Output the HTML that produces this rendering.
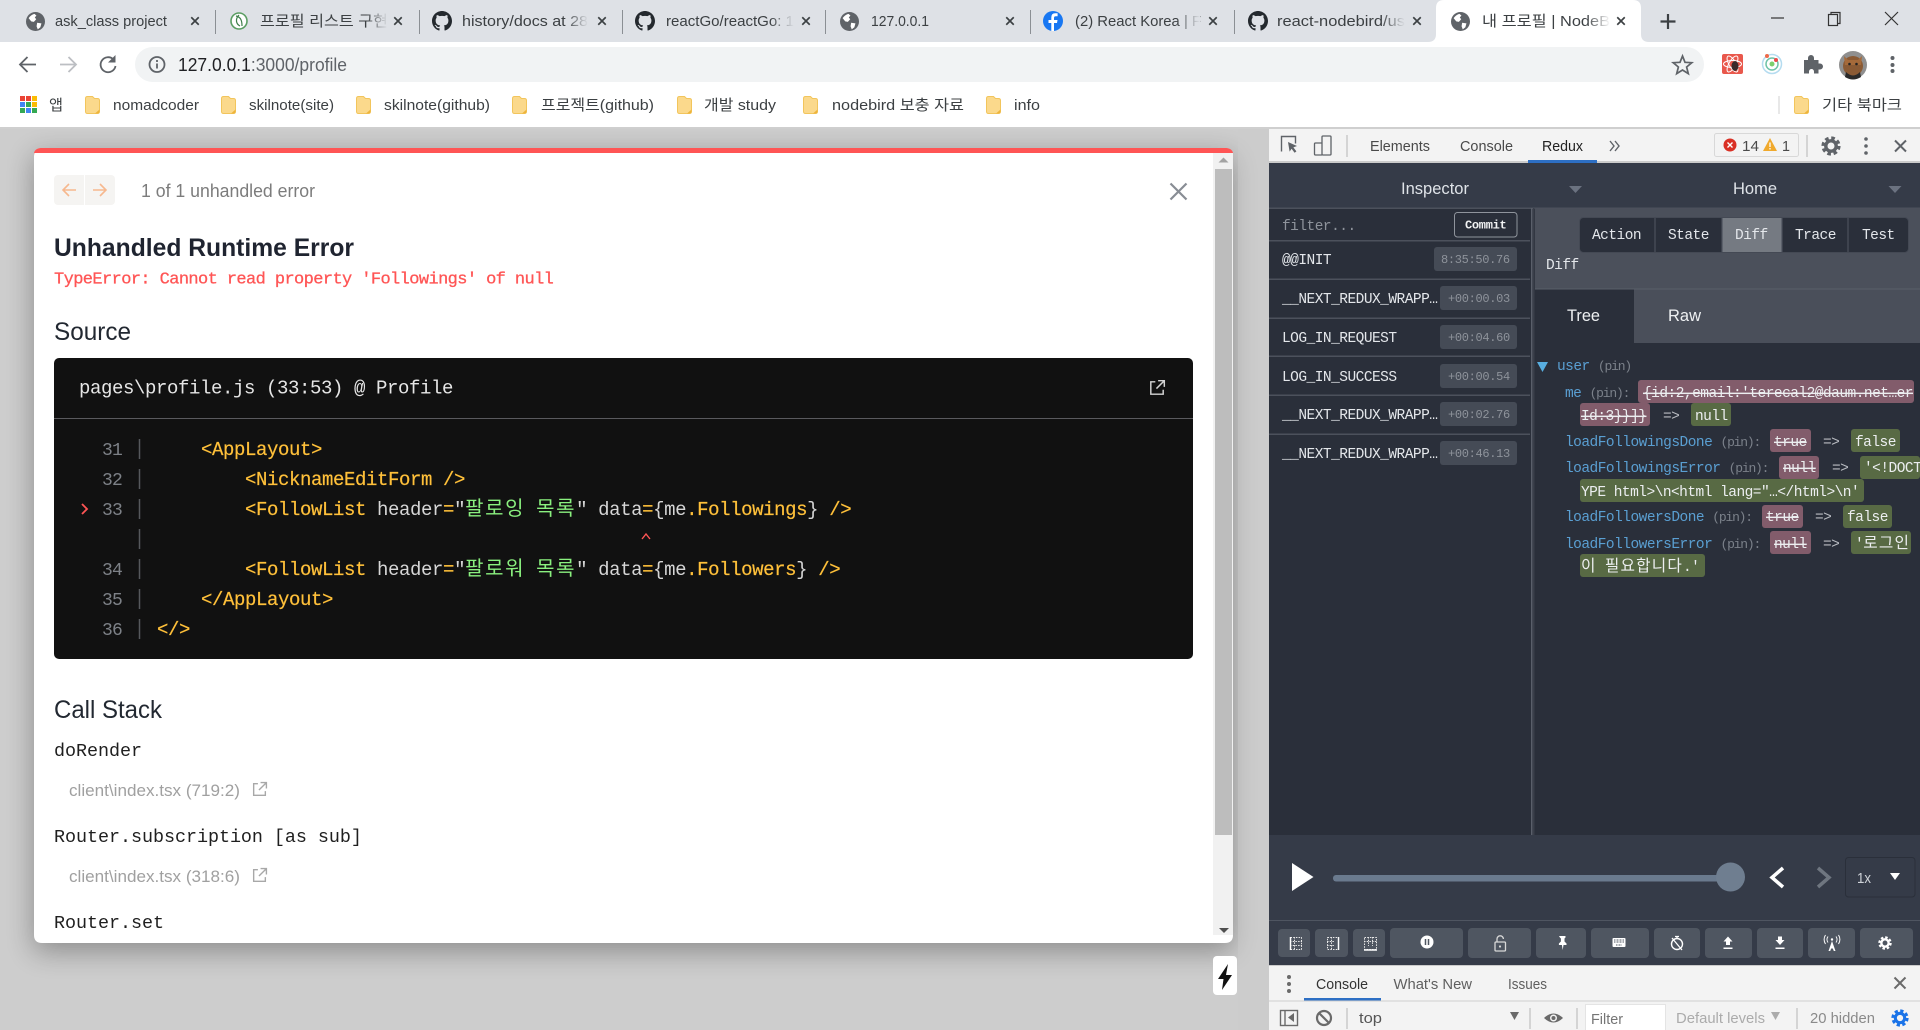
<!DOCTYPE html>
<html lang="ko">
<head>
<meta charset="utf-8">
<title>내 프로필 | NodeBird</title>
<style>
html,body{margin:0;padding:0;width:1920px;height:1030px;overflow:hidden;background:#cdcdcd}
svg{display:block;position:absolute;left:0;top:0}
text{white-space:pre}
.s{font-family:"Liberation Sans","Noto Sans CJK KR",sans-serif}
.m{font-family:"Liberation Mono","Noto Sans CJK KR",monospace}
.tab{font-size:15px;fill:#3c4043}
.bm{font-size:15px;fill:#3c4043}
.dt{font-size:14.5px;fill:#4a4a4a}
.code{font-size:19px;letter-spacing:-.4px;fill:#d6d6d6}
.ln{font-size:18px;letter-spacing:-.8px;fill:#7d8187}
.y{fill:#ffc03a;stroke:#ffc03a;stroke-width:.2px}.g{fill:#8af07f}
.ko{font-size:20px;letter-spacing:1.6px}
.st{font-size:18.4px;letter-spacing:-.04px;fill:#1f1f1f}
.cl{font-size:17px;fill:#a0a0a0}
.d{font-size:14.5px;letter-spacing:-.52px;fill:#e4e7eb}
.tg{font-size:12px;letter-spacing:-.32px;fill:#8e939b}
.k{fill:#5a9fd2}.p{fill:#7b818a;font-size:13px;letter-spacing:-1.2px}.w{fill:#eceef0}.ar{fill:#b9bcc2}
.x{text-decoration:line-through}
.kr{font-size:15.7px;letter-spacing:1.2px}
</style>
</head>
<body>
<svg width="1920" height="1030" viewBox="0 0 1920 1030" xmlns="http://www.w3.org/2000/svg">
<defs>
<symbol id="globe" viewBox="0 0 16 16"><circle cx="8" cy="8" r="8" fill="#5f6368"/><path d="M2.2 5.2C3.4 3.6 5 2.1 7.2 1.6l1.6 1.5-1.4 1.4 1.2 1.6-2 2.2-2.2-.4zM9.4 9l3.6.6-.9 3.2-2.2 1.8-1-2.6z" fill="#fff"/></symbol>
<symbol id="gh" viewBox="0 0 16 16"><path fill="#24292e" d="M8 0C3.58 0 0 3.58 0 8c0 3.54 2.29 6.53 5.47 7.59.4.07.55-.17.55-.38 0-.19-.01-.82-.01-1.49-2.01.37-2.53-.49-2.69-.94-.09-.23-.48-.94-.82-1.13-.28-.15-.68-.52-.01-.53.63-.01 1.08.58 1.23.82.72 1.21 1.87.87 2.33.66.07-.52.28-.87.51-1.07-1.78-.2-3.64-.89-3.64-3.95 0-.87.31-1.59.82-2.15-.08-.2-.36-1.02.08-2.12 0 0 .67-.21 2.2.82.64-.18 1.32-.27 2-.27.68 0 1.36.09 2 .27 1.53-1.04 2.2-.82 2.2-.82.44 1.1.16 1.92.08 2.12.51.56.82 1.27.82 2.15 0 3.07-1.87 3.75-3.65 3.95.29.25.54.73.54 1.48 0 1.07-.01 1.93-.01 2.2 0 .21.15.46.55.38A8.013 8.013 0 0016 8c0-4.42-3.58-8-8-8z"/></symbol>
<symbol id="tx" viewBox="0 0 12 12"><path d="M1.5 1.5l9 9M10.500 1.500l-9 9" stroke="#3c4043" stroke-width="2" fill="none"/></symbol>
<symbol id="fold" viewBox="0 0 15 18"><path d="M.5 2.500q0-2 2-2h5l2 2h3q2 0 2 2v11q0 2-2 2h-10q-2 0-2-2z" fill="#fbd98c" stroke="#f2c55c"/><path d="M10 17.500l4.500-4v2q0 2-2 2z" fill="#eeb43a"/></symbol>
<symbol id="ext" viewBox="0 0 16 16"><path d="M6.500 2.500H2.500v11h11v-4M9 1.500h5.500V7M14.500 1.500L7.500 8.500" fill="none" stroke="currentColor" stroke-width="1.300"/></symbol>
<symbol id="gear" viewBox="0 0 20 20"><circle cx="10" cy="10" r="5.200" fill="none" stroke="currentColor" stroke-width="3.400"/><circle cx="10" cy="10" r="8" fill="none" stroke="currentColor" stroke-width="3.200" stroke-dasharray="3.600 2.683"/></symbol>
<filter id="sh" x="-10%" y="-10%" width="120%" height="125%"><feGaussianBlur stdDeviation="14"/></filter>
<linearGradient id="fd" x1="0" x2="1" y1="0" y2="0"><stop offset="0" stop-color="#dee1e6" stop-opacity="0"/><stop offset="1" stop-color="#dee1e6"/></linearGradient>
<linearGradient id="fw" x1="0" x2="1" y1="0" y2="0"><stop offset="0" stop-color="#fff" stop-opacity="0"/><stop offset="1" stop-color="#fff"/></linearGradient>
</defs>

<!-- Tab strip -->
<rect width="1920" height="42" fill="#dee1e6"/>
<path d="M1428 42q8 0 8-8V8q0-8 8-8H1633q8 0 8 8V34q0 8 8 8z" fill="#fff"/>
<g stroke="#8b8f94" stroke-width="1"><path d="M215.500 10v24M419.500 10v24M622.500 10v24M825.500 10v24M1030.500 10v24M1234.500 10v24"/></g>

<use href="#globe" x="26" y="12" width="19" height="19"/>
<g transform="translate(239 21)"><circle r="8" fill="#fff" stroke="#5b9e63" stroke-width="1.600"/><path d="M-3-5C2-4 3 0 3 5M0-6C-4-2-3 3 1 5" fill="none" stroke="#3e7e4a" stroke-width="1.200"/></g>
<use href="#gh" x="432" y="11" width="20" height="20"/>
<use href="#gh" x="635" y="11" width="20" height="20"/>
<use href="#globe" x="840" y="12" width="19" height="19"/>
<circle cx="1053" cy="21" r="10" fill="#1877f2"/><path d="M1054 31v-8h3l.5-3h-3.500v-2q0-1.700 1.800-1.700h1.800v-3h-2.400q-3.900 0-3.900 4.200v2.500h-2.800v3h2.800v8z" fill="#fff"/>
<use href="#gh" x="1248" y="11" width="20" height="20"/>
<use href="#globe" x="1451" y="12" width="19" height="19"/>

<text class="s tab" x="55" y="26" textLength="112" lengthAdjust="spacingAndGlyphs">ask_class project</text>
<text class="s tab" x="260" y="26" textLength="128" lengthAdjust="spacingAndGlyphs">프로필 리스트 구현</text>
<text class="s tab" x="462" y="26" textLength="126" lengthAdjust="spacingAndGlyphs">history/docs at 28</text>
<text class="s tab" x="666" y="26" textLength="128" lengthAdjust="spacingAndGlyphs">reactGo/reactGo: 1</text>
<text class="s tab" x="871" y="26" textLength="58" lengthAdjust="spacingAndGlyphs">127.0.0.1</text>
<text class="s tab" x="1075" y="26" textLength="126" lengthAdjust="spacingAndGlyphs">(2) React Korea | F</text>
<text class="s tab" x="1277" y="26" textLength="128" lengthAdjust="spacingAndGlyphs">react-nodebird/us</text>
<text class="s tab" x="1482" y="26" textLength="128" lengthAdjust="spacingAndGlyphs">내 프로필 | NodeB</text>
<rect x="366" y="8" width="22" height="26" fill="url(#fd)"/>
<rect x="566" y="8" width="22" height="26" fill="url(#fd)"/>
<rect x="770" y="8" width="24" height="26" fill="url(#fd)"/>
<rect x="1176" y="8" width="24" height="26" fill="url(#fd)"/>
<rect x="1381" y="8" width="24" height="26" fill="url(#fd)"/>
<rect x="1586" y="8" width="24" height="26" fill="url(#fw)"/>

<use href="#tx" x="190" y="16" width="10" height="10"/>
<use href="#tx" x="393" y="16" width="10" height="10"/>
<use href="#tx" x="597" y="16" width="10" height="10"/>
<use href="#tx" x="801" y="16" width="10" height="10"/>
<use href="#tx" x="1005" y="16" width="10" height="10"/>
<use href="#tx" x="1208" y="16" width="10" height="10"/>
<use href="#tx" x="1412" y="16" width="10" height="10"/>
<use href="#tx" x="1616" y="16" width="10" height="10"/>
<path d="M1668 14v15M1660.500 21.500h15" stroke="#3c4043" stroke-width="2.200"/>
<path d="M1771 18h13" stroke="#333" stroke-width="1.200"/>
<g fill="none" stroke="#333" stroke-width="1.200"><rect x="1828.500" y="14.500" width="9" height="11"/><path d="M1831 14.500v-2h9v11h-2.500"/></g>
<path d="M1885 12l13 13M1898 12l-13 13" stroke="#333" stroke-width="1.200"/>

<!-- Toolbar -->
<rect y="42" width="1920" height="85" fill="#fff"/>
<path d="M36 64.500H20.500M27.500 57l-7.500 7.500 7.500 7.500" fill="none" stroke="#5f6368" stroke-width="1.800"/>
<path d="M60 64.500h15.500M68.500 57l7.500 7.500-7.500 7.500" fill="none" stroke="#bcbfc3" stroke-width="1.800"/>
<path d="M113.500 59.500A7.500 7.500 0 1 0 115.500 66" fill="none" stroke="#5f6368" stroke-width="1.800"/><path d="M115.500 55v7.500h-7.500z" fill="#5f6368"/>
<rect x="135" y="47" width="1569" height="35" rx="17.500" fill="#f1f3f4"/>
<circle cx="157" cy="64.500" r="7.500" fill="none" stroke="#5f6368" stroke-width="1.800"/><path d="M157 63.500v5M157 60v2" stroke="#5f6368" stroke-width="1.800"/>
<text class="s" font-size="18" x="178" y="71" textLength="169" lengthAdjust="spacingAndGlyphs"><tspan fill="#202124">127.0.0.1</tspan><tspan fill="#5f6368">:3000/profile</tspan></text>
<path d="M1682.500 56l2.500 6.300 6.800.4-5.200 4.300 1.700 6.600-5.800-3.600-5.800 3.600 1.700-6.600-5.200-4.300 6.800-.4z" fill="none" stroke="#5f6368" stroke-width="1.700"/>
<!-- extensions -->
<rect x="1722" y="54" width="21" height="20" rx="2" fill="#e9584c"/>
<g fill="none" stroke="#fff" stroke-width="1"><ellipse cx="1732.500" cy="64" rx="9" ry="3.500"/><ellipse cx="1732.500" cy="64" rx="9" ry="3.500" transform="rotate(60 1732.500 64)"/><ellipse cx="1732.500" cy="64" rx="9" ry="3.500" transform="rotate(120 1732.500 64)"/></g>
<ellipse cx="1735" cy="66" rx="3.500" ry="5" fill="#3a2a2a"/>
<g fill="none"><circle cx="1772" cy="64" r="9.500" stroke="#b5dcf0" stroke-width="1.500"/><circle cx="1772" cy="64" r="6" stroke="#6fc3a8" stroke-width="1.500"/></g><circle cx="1772" cy="64" r="2.500" fill="#7ccf6e"/><circle cx="1767" cy="56" r="2" fill="#ee6a4a"/><circle cx="1776" cy="60" r="2" fill="#ee4a4a"/>
<path d="M1804 60h4v-2a3 3 0 0 1 6 0v2h4.500v3.500h1.500a3 3 0 0 1 0 6h-1.500v4h-4.500v-2a2.500 2.500 0 0 0-5 0v2h-5z" fill="#5f6368"/>
<circle cx="1853" cy="65" r="14" fill="#8f8f8f"/><circle cx="1853" cy="66" r="10" fill="#8a5a34"/><path d="M1844 56l4 4h10l4-4-1 9h-16z" fill="#a56a3a"/><path d="M1846 72q7 7 14 0l1 5q-8 5-16 0z" fill="#2a2a2a"/><circle cx="1849.500" cy="64" r="1.300" fill="#222"/><circle cx="1856.500" cy="64" r="1.300" fill="#222"/>
<g fill="#5f6368"><circle cx="1892.500" cy="58" r="2"/><circle cx="1892.500" cy="65" r="2"/><circle cx="1892.500" cy="71" r="2"/></g>

<!-- Bookmarks -->
<g>
<rect x="20" y="96" width="5" height="5" fill="#ea4335"/><rect x="26" y="96" width="5" height="5" fill="#ea4335"/><rect x="32" y="96" width="5" height="5" fill="#fbbc04"/>
<rect x="20" y="102" width="5" height="5" fill="#4285f4"/><rect x="26" y="102" width="5" height="5" fill="#34a853"/><rect x="32" y="102" width="5" height="5" fill="#fbbc04"/>
<rect x="20" y="108" width="5" height="5" fill="#34a853"/><rect x="26" y="108" width="5" height="5" fill="#4285f4"/><rect x="32" y="108" width="5" height="5" fill="#34a853"/>
</g>
<text class="s bm" x="49" y="110" textLength="14" lengthAdjust="spacingAndGlyphs">앱</text>
<use href="#fold" x="85" y="96" width="15" height="18"/>
<text class="s bm" x="113" y="110" textLength="86" lengthAdjust="spacingAndGlyphs">nomadcoder</text>
<use href="#fold" x="221" y="96" width="15" height="18"/>
<text class="s bm" x="249" y="110" textLength="85" lengthAdjust="spacingAndGlyphs">skilnote(site)</text>
<use href="#fold" x="356" y="96" width="15" height="18"/>
<text class="s bm" x="384" y="110" textLength="106" lengthAdjust="spacingAndGlyphs">skilnote(github)</text>
<use href="#fold" x="512" y="96" width="15" height="18"/>
<text class="s bm" x="541" y="110" textLength="113" lengthAdjust="spacingAndGlyphs">프로젝트(github)</text>
<use href="#fold" x="677" y="96" width="15" height="18"/>
<text class="s bm" x="704" y="110" textLength="72" lengthAdjust="spacingAndGlyphs">개발 study</text>
<use href="#fold" x="803" y="96" width="15" height="18"/>
<text class="s bm" x="832" y="110" textLength="132" lengthAdjust="spacingAndGlyphs">nodebird 보충 자료</text>
<use href="#fold" x="986" y="96" width="15" height="18"/>
<text class="s bm" x="1014" y="110" textLength="26" lengthAdjust="spacingAndGlyphs">info</text>
<path d="M1779 96v18" stroke="#d0d0d0"/>
<use href="#fold" x="1794" y="96" width="15" height="18"/>
<text class="s bm" x="1822" y="110" textLength="80" lengthAdjust="spacingAndGlyphs">기타 북마크</text>
<rect y="127" width="1920" height="2" fill="#cfcfcf"/>

<!-- Page under overlay -->
<rect y="129" width="1269" height="901" fill="#cdcdcd"/>
<rect x="34" y="156" width="1199" height="795" fill="#000" opacity=".32" filter="url(#sh)"/>
<rect x="1238" y="129" width="31" height="901" fill="#cdcdcd" opacity=".45"/>

<!-- Modal -->
<path d="M34 156q0-8 8-8H1225q8 0 8 8V935q0 8-8 8H42q-8 0-8-8z" fill="#fff"/>
<path d="M34 156q0-8 8-8H1225q8 0 8 8v-3H34z" fill="#ff5555"/><path d="M34 153q1-5 8-5H1225q7 0 8 5z" fill="#ff5555"/>
<!-- scrollbar -->
<rect x="1213" y="153" width="20" height="782" fill="#f1f1f1"/>
<rect x="1215" y="169" width="17" height="666" fill="#bdbdbd"/>
<path d="M1223.500 157.500l5 5h-10z" fill="#a3a3a3"/><path d="M1219 928h10l-5 5z" fill="#4f4f4f"/>

<!-- Nav -->
<rect x="54" y="175" width="61" height="30" rx="4" fill="#f5f4f2"/><path d="M84.500 175v30" stroke="#fff"/>
<path d="M76 190H63M69 184l-6 6 6 6" fill="none" stroke="#f6b88e" stroke-width="1.600"/>
<path d="M93 190h13M100 184l6 6-6 6" fill="none" stroke="#f6b88e" stroke-width="1.600"/>
<text class="s" font-size="18" fill="#7c7c7c" x="141" y="197" textLength="174" lengthAdjust="spacingAndGlyphs">1 of 1 unhandled error</text>
<path d="M1170.500 183.500l16 16M1186.500 183.500l-16 16" stroke="#888d94" stroke-width="2.200"/>

<text class="s" font-size="25" font-weight="700" fill="#1f2430" x="54" y="256" textLength="300" lengthAdjust="spacingAndGlyphs">Unhandled Runtime Error</text>
<text class="m" font-size="17" letter-spacing="-.6" fill="#ff5555" stroke="#ff5555" stroke-width=".3" x="54" y="283.500">TypeError: Cannot read property 'Followings' of null</text>
<text class="s" font-size="25" fill="#222831" x="54" y="340" textLength="77" lengthAdjust="spacingAndGlyphs">Source</text>

<!-- Code frame -->
<rect x="54" y="358" width="1139" height="301" rx="5" fill="#111"/>
<rect x="54" y="418" width="1139" height="1" fill="#5a5a5e"/>
<text class="m code" x="79" y="393.500" style="fill:#e6e6e6">pages\profile.js (33:53) @ Profile</text>
<use href="#ext" x="1148" y="379" width="18" height="18" color="#d4d4d4"/>

<g stroke="#55585c" stroke-width="1.500"><path d="M139.500 439v20M139.500 469v20M139.500 499v20M139.500 529v20M139.500 559v20M139.500 589v20M139.500 619v20"/></g>
<text class="m ln" x="102" y="455">31</text>
<text class="m ln" x="102" y="485">32</text>
<text class="m ln" x="102" y="515">33</text>
<text class="m ln" x="102" y="575">34</text>
<text class="m ln" x="102" y="605">35</text>
<text class="m ln" x="102" y="635">36</text>
<path d="M82 504l5 5-5 5" fill="none" stroke="#ff5555" stroke-width="1.800"/>
<text class="m code y" x="201" y="455">&lt;AppLayout&gt;</text>
<text class="m code y" x="245" y="485">&lt;NicknameEditForm /&gt;</text>
<text class="m code" x="245" y="515"><tspan class="y">&lt;FollowList</tspan> header<tspan class="y">=</tspan>"<tspan class="g ko">팔로잉</tspan> <tspan class="g ko">목록</tspan>" data<tspan class="y">=</tspan>{me<tspan class="y">.Followings</tspan>} <tspan class="y">/&gt;</tspan></text>
<path d="M642 539l4-5 4 5" fill="none" stroke="#ff5555" stroke-width="1.400"/>
<text class="m code" x="245" y="575"><tspan class="y">&lt;FollowList</tspan> header<tspan class="y">=</tspan>"<tspan class="g ko">팔로워</tspan> <tspan class="g ko">목록</tspan>" data<tspan class="y">=</tspan>{me<tspan class="y">.Followers</tspan>} <tspan class="y">/&gt;</tspan></text>
<text class="m code y" x="201" y="605">&lt;/AppLayout&gt;</text>
<text class="m code y" x="157" y="635">&lt;/&gt;</text>

<!-- Call stack -->
<text class="s" font-size="25" fill="#222831" x="54" y="718" textLength="108" lengthAdjust="spacingAndGlyphs">Call Stack</text>
<text class="m st" x="54" y="756">doRender</text>
<text class="s cl" x="69" y="796" textLength="171" lengthAdjust="spacingAndGlyphs">client\index.tsx (719:2)</text>
<use href="#ext" x="251" y="781" width="17" height="17" color="#a8a8a8"/>
<text class="m st" x="54" y="842">Router.subscription [as sub]</text>
<text class="s cl" x="69" y="882" textLength="171" lengthAdjust="spacingAndGlyphs">client\index.tsx (318:6)</text>
<use href="#ext" x="251" y="867" width="17" height="17" color="#a8a8a8"/>
<text class="m st" x="54" y="928">Router.set</text>

<!-- Static indicator -->
<rect x="1213" y="956" width="24" height="39" rx="4" fill="#fff"/>
<path d="M1228 964l-10 15h5.500l-1.500 11 10-15h-6z" fill="#111"/>

<!-- DevTools -->
<rect x="1269" y="129" width="651" height="33" fill="#f3f3f3"/>
<rect x="1269" y="161" width="651" height="2" fill="#cbcbcb"/>
<path d="M1281.500 151.500v-15h14v7" fill="none" stroke="#5f6368" stroke-width="1.400"/><path d="M1288 142l9 4-3.600 1.400 3 4-1.800 1.400-3-4-2 2.800z" fill="#5f6368"/>
<rect x="1314.500" y="143" width="8" height="12" rx="1" fill="none" stroke="#5f6368" stroke-width="1.300"/><rect x="1322" y="136" width="9" height="19" rx="1" fill="#f3f3f3" stroke="#5f6368" stroke-width="1.300"/>
<path d="M1347 135v22" stroke="#c9c9c9" stroke-width="1.500"/>
<text class="s dt" x="1370" y="151" textLength="60" lengthAdjust="spacingAndGlyphs">Elements</text>
<text class="s dt" x="1460" y="151" textLength="53" lengthAdjust="spacingAndGlyphs">Console</text>
<text class="s dt" x="1542" y="151" textLength="41" lengthAdjust="spacingAndGlyphs" style="fill:#222">Redux</text>
<rect x="1528" y="160" width="69" height="3" fill="#2d6fc4"/>
<path d="M1610 141l4 5-4 5M1615 141l4 5-4 5" fill="none" stroke="#5f6368" stroke-width="1.400"/>
<rect x="1714.500" y="133.500" width="84" height="23" rx="2" fill="#f3f3f3" stroke="#d8d8d8"/>
<circle cx="1730" cy="145" r="6.500" fill="#d93025"/><path d="M1727.500 142.500l5 5M1732.500 142.500l-5 5" stroke="#fff" stroke-width="1.400"/>
<text class="s dt" x="1742" y="151" textLength="17" lengthAdjust="spacingAndGlyphs">14</text>
<path d="M1770 138l7 13h-14z" fill="#f0a92c"/><path d="M1770 142.500v4.500M1770 148v1.500" stroke="#fff" stroke-width="1.300"/>
<text class="s dt" x="1782" y="151" textLength="8" lengthAdjust="spacingAndGlyphs">1</text>
<path d="M1807 135v22" stroke="#c9c9c9" stroke-width="1.500"/>
<use href="#gear" x="1821" y="136" width="20" height="20" color="#5f6368"/>
<g fill="#5f6368"><circle cx="1866" cy="139" r="1.800"/><circle cx="1866" cy="146" r="1.800"/><circle cx="1866" cy="153" r="1.800"/></g>
<path d="M1895 140.500l11 11M1906 140.500l-11 11" stroke="#5f6368" stroke-width="2"/>

<!-- Redux panel -->
<rect x="1269" y="163" width="651" height="802" fill="#2a2f3a"/>
<rect x="1269" y="163" width="651" height="45" fill="#353b48"/>
<rect x="1269" y="207.500" width="651" height="1.500" fill="#4c515c"/>
<text class="s" font-size="17" fill="#dfe3e8" x="1401" y="194" textLength="68" lengthAdjust="spacingAndGlyphs">Inspector</text>
<text class="s" font-size="17" fill="#dfe3e8" x="1733" y="194" textLength="44" lengthAdjust="spacingAndGlyphs">Home</text>
<path d="M1569 186h13l-6.500 7zM1888.500 186h13l-6.500 7z" fill="#6b7280"/>

<!-- Action list -->
<text class="m d" x="1282" y="230" style="fill:#8e939b">filter...</text>
<rect x="1454.500" y="212.500" width="62.500" height="24.500" rx="3" fill="#2a2f3a" stroke="#8f949c"/>
<text class="m" font-size="12" font-weight="700" fill="#f2f3f4" x="1465" y="228.500" letter-spacing="-.3">Commit</text>
<g fill="#4c515c"><rect x="1269" y="240" width="261" height="1.500"/><rect x="1269" y="278.500" width="261" height="1.500"/><rect x="1269" y="317.500" width="261" height="1.500"/><rect x="1269" y="355.500" width="261" height="1.500"/><rect x="1269" y="394.500" width="261" height="1.500"/><rect x="1269" y="433.500" width="261" height="1.500"/></g>

<text class="m d" x="1282" y="264">@@INIT</text>
<rect x="1434" y="247" width="83" height="24" rx="3" fill="#454b56"/><text class="m tg" x="1441" y="263">8:35:50.76</text>
<text class="m d" x="1282" y="303">__NEXT_REDUX_WRAPP…</text>
<rect x="1440" y="286" width="77" height="24" rx="3" fill="#454b56"/><text class="m tg" x="1448" y="302">+00:00.03</text>
<text class="m d" x="1282" y="342">LOG_IN_REQUEST</text>
<rect x="1440" y="325" width="77" height="24" rx="3" fill="#454b56"/><text class="m tg" x="1448" y="341">+00:04.60</text>
<text class="m d" x="1282" y="381">LOG_IN_SUCCESS</text>
<rect x="1440" y="364" width="77" height="24" rx="3" fill="#454b56"/><text class="m tg" x="1448" y="380">+00:00.54</text>
<text class="m d" x="1282" y="419">__NEXT_REDUX_WRAPP…</text>
<rect x="1440" y="402" width="77" height="24" rx="3" fill="#454b56"/><text class="m tg" x="1448" y="418">+00:02.76</text>
<text class="m d" x="1282" y="458">__NEXT_REDUX_WRAPP…</text>
<rect x="1440" y="441" width="77" height="24" rx="3" fill="#454b56"/><text class="m tg" x="1448" y="457">+00:46.13</text>

<rect x="1531" y="208" width="1.500" height="627" fill="#5a5f6a"/><rect x="1533" y="208" width="1.500" height="627" fill="#3a3f4a"/>

<!-- Right header -->
<rect x="1535" y="208.500" width="385" height="80.500" fill="#4b505b"/>
<rect x="1535" y="288.500" width="385" height="1" fill="#5a5f6a"/>
<rect x="1579.500" y="217.500" width="329" height="35" rx="4" fill="#2a2f3a" stroke="#444954"/>
<rect x="1722" y="218" width="60" height="34" fill="#757a82"/>
<path d="M1655 218v34M1722 218v34M1782 218v34M1848 218v34" stroke="#4c515c" stroke-width="1.200"/>
<text class="m d" x="1592" y="239">Action</text>
<text class="m d" x="1668" y="239">State</text>
<text class="m d" x="1735" y="239">Diff</text>
<text class="m d" x="1795" y="239">Trace</text>
<text class="m d" x="1862" y="239">Test</text>
<text class="m d" x="1546" y="269">Diff</text>

<!-- Tree / Raw -->
<rect x="1634" y="289.500" width="286" height="53.500" fill="#4a4f5a"/>
<text class="s" font-size="17" fill="#eef0f2" x="1567" y="321" textLength="33" lengthAdjust="spacingAndGlyphs">Tree</text>
<text class="s" font-size="17" fill="#eef0f2" x="1668" y="321" textLength="33" lengthAdjust="spacingAndGlyphs">Raw</text>

<!-- Diff tree -->
<path d="M1537 362h11l-5.500 10z" fill="#58aee0"/>
<text class="m d" x="1557" y="370"><tspan class="k">user</tspan> <tspan class="p">(pin)</tspan></text>

<rect x="1638" y="380" width="276" height="23" rx="3" fill="#825c6b"/>
<rect x="1580" y="403" width="70" height="23" rx="3" fill="#825c6b"/>
<rect x="1691" y="403" width="40" height="23" rx="3" fill="#586a44"/>
<text class="m d" x="1565" y="397"><tspan class="k">me</tspan> <tspan class="p">(pin):</tspan></text>
<text class="m d x w" x="1643" y="397">{id:2,email:'terecal2@daum.net…er</text>
<text class="m d x w" x="1581" y="420">Id:3}}]}</text>
<text class="m d ar" x="1663" y="420">=&gt;</text>
<text class="m d w" x="1695" y="420">null</text>

<rect x="1770" y="429" width="41" height="23" rx="3" fill="#825c6b"/>
<rect x="1851" y="429" width="49" height="23" rx="3" fill="#586a44"/>
<text class="m d" x="1565" y="446"><tspan class="k">loadFollowingsDone</tspan> <tspan class="p">(pin):</tspan></text>
<text class="m d x w" x="1774" y="446">true</text>
<text class="m d ar" x="1823" y="446">=&gt;</text>
<text class="m d w" x="1855" y="446">false</text>

<rect x="1779" y="456" width="40" height="23" rx="3" fill="#825c6b"/>
<rect x="1860" y="456" width="60" height="23" rx="3" fill="#586a44"/>
<rect x="1580" y="479" width="284" height="23" rx="3" fill="#586a44"/>
<text class="m d" x="1565" y="472"><tspan class="k">loadFollowingsError</tspan> <tspan class="p">(pin):</tspan></text>
<text class="m d x w" x="1783" y="472">null</text>
<text class="m d ar" x="1832" y="472">=&gt;</text>
<text class="m d w" x="1864" y="472">'&lt;!DOCT</text>
<text class="m d w" x="1581" y="496">YPE html&gt;\n&lt;html lang="…&lt;/html&gt;\n'</text>

<rect x="1762" y="505" width="41" height="23" rx="3" fill="#825c6b"/>
<rect x="1843" y="505" width="49" height="23" rx="3" fill="#586a44"/>
<text class="m d" x="1565" y="521"><tspan class="k">loadFollowersDone</tspan> <tspan class="p">(pin):</tspan></text>
<text class="m d x w" x="1766" y="521">true</text>
<text class="m d ar" x="1815" y="521">=&gt;</text>
<text class="m d w" x="1847" y="521">false</text>

<rect x="1770" y="531" width="41" height="23" rx="3" fill="#825c6b"/>
<rect x="1851" y="531" width="60" height="23" rx="3" fill="#586a44"/>
<rect x="1580" y="554" width="125" height="23" rx="3" fill="#586a44"/>
<text class="m d" x="1565" y="548"><tspan class="k">loadFollowersError</tspan> <tspan class="p">(pin):</tspan></text>
<text class="m d x w" x="1774" y="548">null</text>
<text class="m d ar" x="1823" y="548">=&gt;</text>
<text class="m d w" x="1855" y="548">'<tspan class="kr">로그인</tspan></text>
<text class="m d w" x="1581" y="571"><tspan class="kr">이</tspan> <tspan class="kr">필요합니다</tspan>.'</text>

<!-- Slider bar -->
<rect x="1269" y="835" width="651" height="130" fill="#353b48"/>
<rect x="1269" y="920" width="651" height="1" fill="#4f5561"/>
<path d="M1292 863l21.500 14-21.500 14z" fill="#fff"/>
<rect x="1333" y="875" width="390" height="6.500" rx="3" fill="#6a7a8e"/>
<circle cx="1730.500" cy="877" r="14.500" fill="#6f7e90"/>
<path d="M1783 868l-11 9.500 11 9.500" fill="none" stroke="#fff" stroke-width="3.500"/>
<path d="M1818 868l11 9.500-11 9.500" fill="none" stroke="#6f7680" stroke-width="3.500"/>
<rect x="1845.500" y="857.500" width="69.500" height="39.500" rx="3" fill="#353b48" stroke="#2a2f3a"/>
<text class="s" font-size="15" fill="#cfd3d8" x="1857" y="883" textLength="14" lengthAdjust="spacingAndGlyphs">1x</text>
<path d="M1890 873h10l-5 7z" fill="#fff"/>

<!-- Button row -->
<g fill="#4f5661">
<rect x="1278" y="929" width="32" height="28" rx="4"/><rect x="1315" y="929" width="33" height="28" rx="4"/><rect x="1353" y="929" width="32" height="28" rx="4"/>
<rect x="1390" y="928" width="73" height="30" rx="4"/><rect x="1468" y="928" width="63" height="30" rx="4"/><rect x="1536" y="928" width="50" height="30" rx="4"/>
<rect x="1591" y="928" width="58" height="30" rx="4"/><rect x="1654" y="928" width="46" height="30" rx="4"/><rect x="1705" y="928" width="47" height="30" rx="4"/>
<rect x="1757" y="928" width="46" height="30" rx="4"/><rect x="1808" y="928" width="47" height="30" rx="4"/><rect x="1860" y="928" width="53" height="30" rx="4"/>
</g>
<g fill="none" stroke="#e8e8e8" stroke-width="1" stroke-dasharray="1.500 1.200">
<rect x="1290.500" y="937.500" width="11" height="12"/><path d="M1294.500 937v13M1290 941.500h12M1290 945.500h12"/>
<rect x="1327.500" y="937.500" width="11" height="12"/><path d="M1331.500 937v13M1327 941.500h8M1327 945.500h8"/>
<rect x="1364.500" y="937.500" width="12" height="12"/><path d="M1368.500 937v9M1372.500 937v9M1364 941.500h13"/>
</g>
<path d="M1290.500 937v13" stroke="#fff" stroke-width="1.500"/><path d="M1338.500 937v13" stroke="#fff" stroke-width="1.500"/><path d="M1364 950h13" stroke="#fff" stroke-width="1.500"/>
<circle cx="1427" cy="942" r="6.500" fill="#fff"/><path d="M1425.500 939v6M1428.500 939v6" stroke="#4f5661" stroke-width="1.500"/>
<rect x="1495" y="942" width="10.500" height="9" rx="1" fill="none" stroke="#d8d8d8" stroke-width="1.300"/><path d="M1497 942v-3a3.200 3.200 0 0 1 6.400 0" fill="none" stroke="#d8d8d8" stroke-width="1.300"/><circle cx="1500" cy="946.500" r="1.100" fill="#d8d8d8"/>
<path d="M1559 936h6.500v1.500l-1 1v3l2 2v1.500h-3l-.8 5-.8-5h-3v-1.500l2-2v-3l-1-1z" fill="#fff"/>
<rect x="1612.500" y="938" width="13" height="9" rx="1" fill="#fff"/><path d="M1614 940h10M1614 942h10M1616 945h6" stroke="#4f5661" stroke-width=".9" stroke-dasharray="1 .5"/>
<circle cx="1677" cy="944" r="5.500" fill="none" stroke="#fff" stroke-width="1.400"/><path d="M1675 936.500h4M1677 936.500v2M1672 938l10 12" stroke="#fff" stroke-width="1.300"/>
<path d="M1728 936.500l4.500 5h-2.500v3.500h-4v-3.500h-2.500zM1723.500 947.500h9v1.500h-9z" fill="#fff"/>
<path d="M1778 936.500h4v3.500h2.500l-4.500 5-4.500-5h2.500zM1775.500 947.500h9v1.500h-9z" fill="#fff"/>
<path d="M1832 941l-3.500 10h1.700l1-2.500h1.600l1 2.500h1.700z" fill="#fff"/><circle cx="1832" cy="939.500" r="1.200" fill="#fff"/><path d="M1828 936.500a5 5 0 0 0 0 6M1836 936.500a5 5 0 0 1 0 6M1825.500 935a8 8 0 0 0 0 9M1838.500 935a8 8 0 0 1 0 9" fill="none" stroke="#fff" stroke-width="1"/>
<use href="#gear" x="1878" y="936" width="14" height="14" color="#fff"/>

<!-- Console drawer -->
<rect x="1269" y="965" width="651" height="65" fill="#f3f3f3"/>
<rect x="1269" y="965" width="651" height="1" fill="#cbcbcb"/>
<g fill="#6a6a6a"><circle cx="1289" cy="977" r="2"/><circle cx="1289" cy="984" r="2"/><circle cx="1289" cy="991" r="2"/></g>
<text class="s" font-size="15" fill="#333" x="1316" y="989" textLength="52" lengthAdjust="spacingAndGlyphs">Console</text>
<text class="s" font-size="15" fill="#5f5f5f" x="1393.500" y="989" textLength="78.500" lengthAdjust="spacingAndGlyphs">What's New</text>
<text class="s" font-size="15" fill="#5f5f5f" x="1508" y="989" textLength="39" lengthAdjust="spacingAndGlyphs">Issues</text>
<rect x="1304" y="998" width="77" height="3" fill="#2d6fc4"/>
<rect x="1269" y="1000.500" width="651" height="1" fill="#cfcfcf"/>
<path d="M1894.500 977.500l11 11M1905.500 977.500l-11 11" stroke="#6a6a6a" stroke-width="2"/>

<rect x="1280.500" y="1010.500" width="17" height="15" fill="none" stroke="#6a6a6a" stroke-width="1.400"/><path d="M1285 1010v16" stroke="#6a6a6a" stroke-width="1.400"/><path d="M1294 1013v9l-6-4.500z" fill="#6a6a6a"/>
<circle cx="1324" cy="1018" r="7" fill="none" stroke="#6a6a6a" stroke-width="2.200"/><path d="M1319 1013l10 10" stroke="#6a6a6a" stroke-width="2.200"/>
<path d="M1347 1008v21M1530 1008v21M1577 1008v21M1797 1008v21" stroke="#c9c9c9" stroke-width="1.500"/>
<text class="s" font-size="15" fill="#555" x="1359" y="1023" textLength="23" lengthAdjust="spacingAndGlyphs">top</text>
<path d="M1510 1012h9l-4.500 8z" fill="#6a6a6a"/>
<path d="M1544 1018q9.500-9 19 0q-9.500 9-19 0z" fill="#6a6a6a"/><circle cx="1553.500" cy="1018" r="3.500" fill="#f3f3f3"/><circle cx="1553.500" cy="1018" r="2" fill="#6a6a6a"/>
<rect x="1585.500" y="1004.500" width="80" height="26" fill="#fff" stroke="#e4e4e4"/>
<text class="s" font-size="15" fill="#757575" x="1591" y="1024" textLength="32" lengthAdjust="spacingAndGlyphs">Filter</text>
<text class="s" font-size="15" fill="#ababab" x="1676" y="1023" textLength="89" lengthAdjust="spacingAndGlyphs">Default levels</text>
<path d="M1771 1012h9l-4.500 8z" fill="#ababab"/>
<text class="s" font-size="15" fill="#8a8a8a" x="1810" y="1023" textLength="65" lengthAdjust="spacingAndGlyphs">20 hidden</text>
<use href="#gear" x="1891" y="1009" width="18" height="18" color="#1a73e8"/>
</svg>
</body>
</html>
